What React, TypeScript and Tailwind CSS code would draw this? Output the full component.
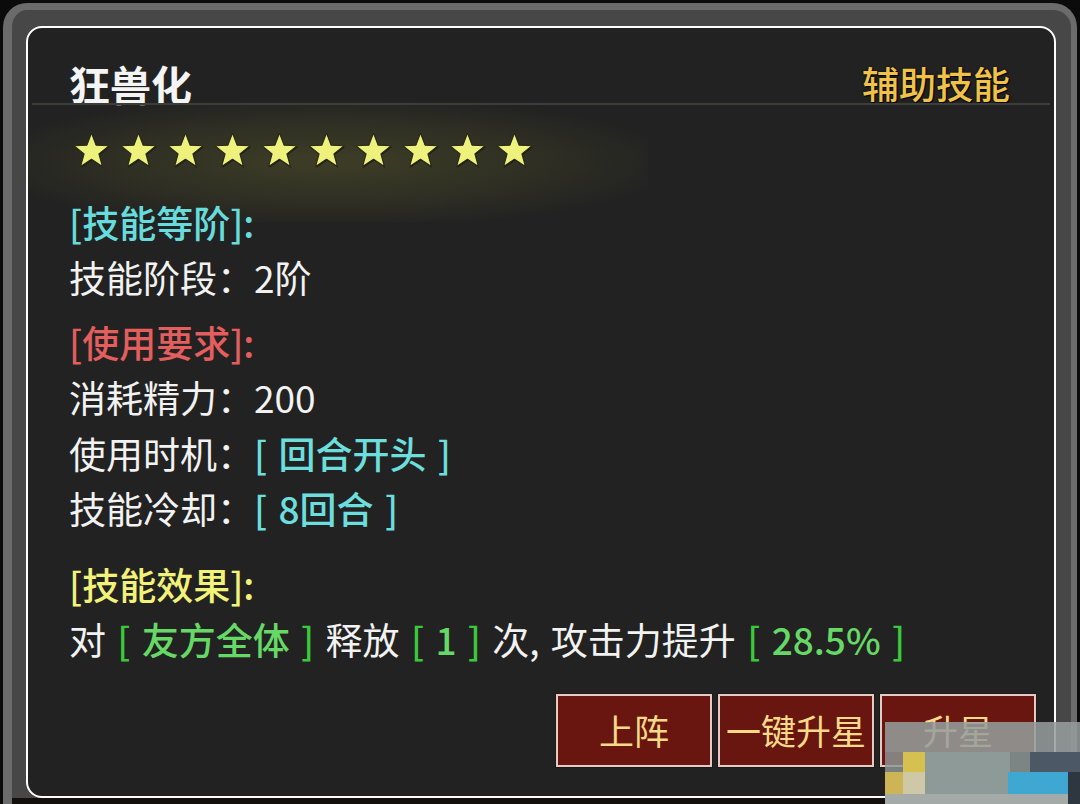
import React from "react";

const STAR = "20,2 24.7,14.53 38.07,15.13 27.61,23.47 31.17,36.37 20,29 8.83,36.37 12.39,23.47 1.93,15.13 15.3,14.53";

function Star() {
  return (
    <svg width="39" height="39" viewBox="0 0 40 40" className="shrink-0">
      <polygon points={STAR} fill="#1a1a10" transform="translate(0.8,1.2)" />
      <polygon points={STAR} fill="#eef27c" stroke="#2a2a18" strokeWidth="1.2" strokeLinejoin="round" />
    </svg>
  );
}

const line = "h-[55px] flex items-center whitespace-pre [word-spacing:3px]";

export default function App() {
  const stars = Array.from({ length: 10 });
  return (
    <div
      className="w-[1080px] h-[804px] bg-[#0b0b0b] overflow-hidden relative"
      style={{ fontFamily: '"Noto Sans CJK SC", "Noto Sans", sans-serif' }}
    >
      <div className="mt-[3px] ml-[3px] w-[1074px] h-[801px] rounded-t-[24px] bg-[#474747] border-t-[7px] border-l-[9px] border-r-[6px] border-[#6b6b6b] pt-[16px] pl-[14px]">
        <div className="relative w-[1030px] h-[772px] border-2 border-white rounded-[16px] bg-[#222222] flex flex-col overflow-hidden">
          {/* glow behind stars */}
          <div className="absolute left-[-20px] top-[74px] w-[640px] h-[120px] bg-[radial-gradient(ellipse_at_center,rgba(100,100,45,0.42)_0%,rgba(80,80,40,0.25)_50%,rgba(34,34,34,0)_78%)]" />
          {/* header */}
          <div className="relative h-[75px] flex items-center justify-between pt-[34px] pl-[41px] pr-[44px]">
            <span className="text-[41px] leading-[40px] font-bold text-[#f4f4f4]">狂兽化</span>
            <span className="text-[37px] leading-[40px] font-medium text-[#f0c24a] [text-shadow:0_0_2px_#000,1px_1px_1px_#000]">
              辅助技能
            </span>
          </div>
          <div className="relative h-[2px] mx-[4px] bg-[#3d3d3a]" />
          {/* stars */}
          <div className="relative mt-[20px] h-[50px] flex items-center gap-[8px] pl-[44px]">
            {stars.map((_, i) => (
              <Star key={i} />
            ))}
          </div>
          {/* content */}
          <div className="relative mt-[20px] pl-[41px] text-[37px] text-[#f2f2f2]">
            <div className={line + " text-[#68dcdc] font-medium"}>[技能等阶]:</div>
            <div className={line}>技能阶段：2阶</div>
            <div className={line + " mt-[10px] text-[#e45e5e] font-medium"}>[使用要求]:</div>
            <div className={line}>消耗精力：200</div>
            <div className={line + " mt-[1px]"}>
              使用时机：<span className="text-[#6cdede] font-medium">[ 回合开头 ]</span>
            </div>
            <div className={line}>
              技能冷却：<span className="text-[#6cdede] font-medium">[ 8回合 ]</span>
            </div>
            <div className={line + " mt-[21px] text-[#f2f27a] font-medium"}>[技能效果]:</div>
            <div className={line}>
              对 <span className="text-[#3cc83c] font-medium">[ </span>
              <span className="text-[#66d866] font-medium">友方全体</span>
              <span className="text-[#3cc83c] font-medium"> ]</span> 释放 <span className="text-[#3cc83c] font-medium">[ </span>
              <span className="text-[#66d866] font-medium">1</span>
              <span className="text-[#3cc83c] font-medium"> ]</span> 次, 攻击力提升 <span className="text-[#3cc83c] font-medium">[ </span>
              <span className="text-[#66d866] font-medium">28.5%</span>
              <span className="text-[#3cc83c] font-medium"> ]</span>
            </div>
          </div>
          {/* buttons */}
          <div className="relative mt-[27px] flex justify-end gap-[6px] pr-[18px]">
            {["上阵", "一键升星", "升星"].map((t) => (
              <div
                key={t}
                className="w-[156px] h-[73px] bg-[#6a1610] border-2 border-[#e6cbc4] flex items-center justify-center text-[35px] text-[#f6da8a] shadow-[0_0_0_1px_#1a1a1a]"
              >
                {t}
              </div>
            ))}
          </div>
        </div>
        <div className="h-[6px] -ml-[14px] bg-[#120f0c]" />
      </div>

      {/* mosaic watermark */}
      <div className="absolute left-[885px] top-[722px] w-[195px] h-[82px] bg-[rgba(140,150,150,0.82)]">
        <div className="absolute left-0 top-0 w-[195px] h-[30px] bg-[rgba(170,175,170,0.25)]" />
        <div className="absolute left-[18px] top-[30px] w-[22px] h-[20px] bg-[#d6c050]" />
        <div className="absolute left-[0px] top-[50px] w-[18px] h-[22px] bg-[#cdb456]" />
        <div className="absolute left-[18px] top-[50px] w-[22px] h-[22px] bg-[#cfc8a6]" />
        <div className="absolute left-[40px] top-[30px] w-[85px] h-[42px] bg-[#8e9a98]" />
        <div className="absolute left-[125px] top-[30px] w-[20px] h-[20px] bg-[#7c8484]" />
        <div className="absolute left-[145px] top-[30px] w-[50px] h-[20px] bg-[#4c5866]" />
        <div className="absolute left-[123px] top-[50px] w-[60px] h-[22px] bg-[#3fa8d2]" />
        <div className="absolute left-[183px] top-[50px] w-[12px] h-[32px] bg-[#2e3640]" />
        <div className="absolute left-[0px] top-[72px] w-[183px] h-[10px] bg-[#a4aaa8]" />
      </div>
    </div>
  );
}
